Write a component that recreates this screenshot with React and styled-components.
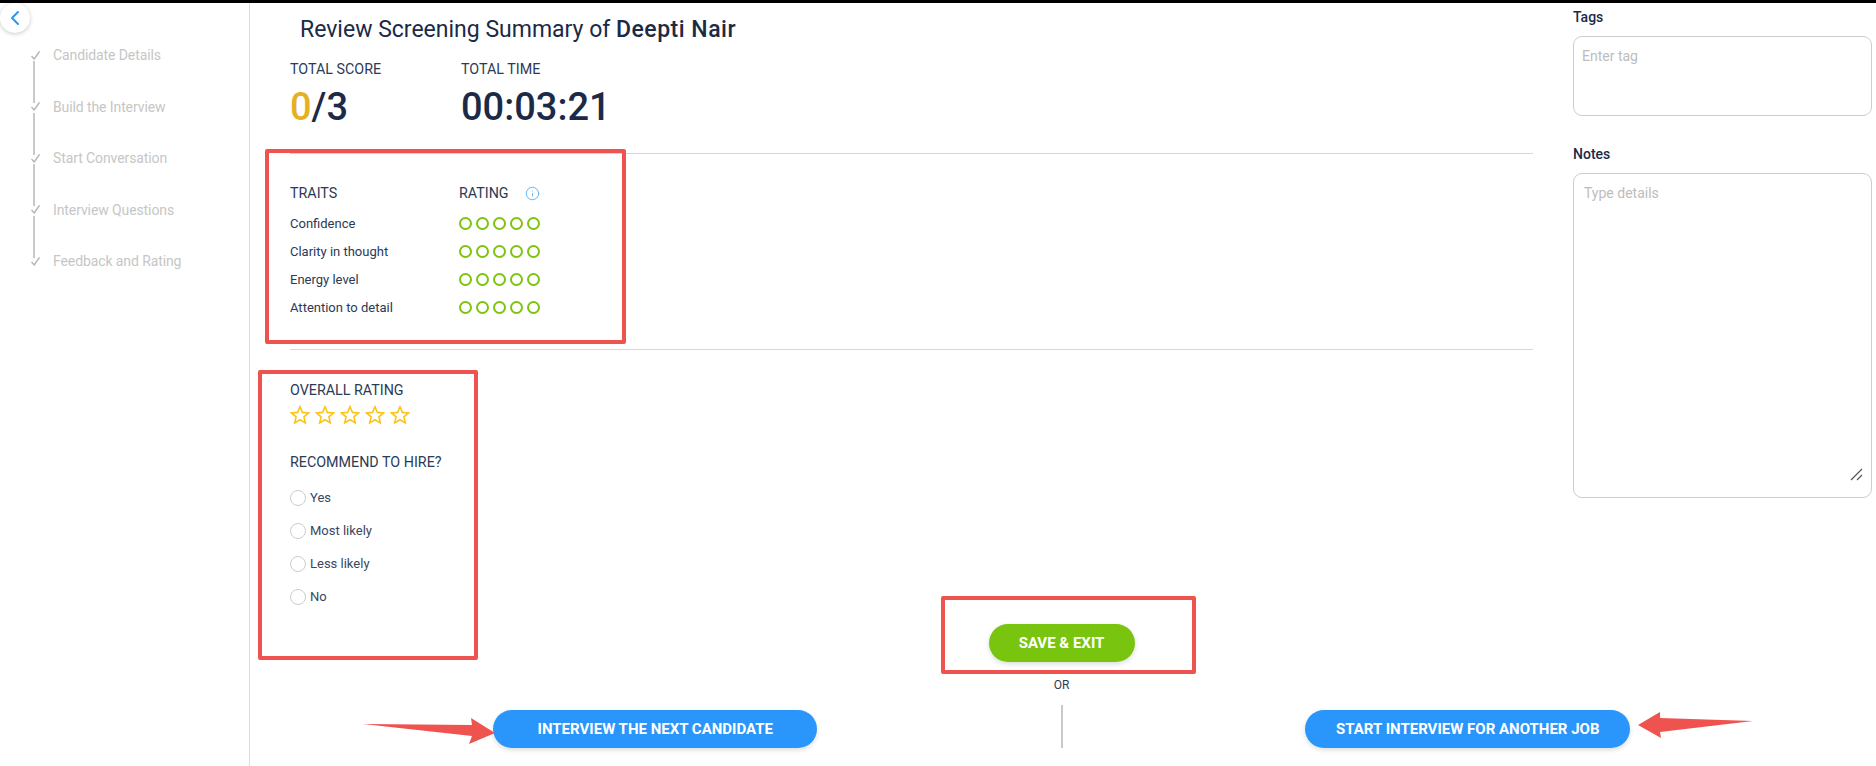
import React from "react";
import styled, { createGlobalStyle } from "styled-components";
import { ChevronLeft, Info } from "lucide-react";

const GlobalStyle = createGlobalStyle`
  html, body {
    margin: 0;
    padding: 0;
    background: #fff;
    font-family: Roboto, "Liberation Sans", sans-serif;
    color: #26344f;
  }
  * { box-sizing: border-box; }
`;

const Page = styled.div`
  position: relative;
  width: 1876px;
  height: 766px;
  overflow: hidden;
  display: flex;
  flex-direction: column;
`;

const TopBar = styled.div`
  height: 3px;
  background: #000;
  flex: none;
`;

const Shell = styled.div`
  flex: 1;
  display: flex;
  min-height: 0;
`;

/* sidebar */
const Sidebar = styled.aside`
  width: 250px;
  flex: none;
  border-right: 1px solid #d5e0ea;
  display: flex;
  flex-direction: column;
`;

const BackButton = styled.button`
  width: 30px;
  height: 30px;
  margin: 0;
  padding: 0;
  border: none;
  border-radius: 50%;
  background: #fff;
  box-shadow: 0 1px 4px rgba(0, 0, 0, 0.22);
  color: #2a96fb;
  display: flex;
  align-items: center;
  justify-content: center;
  flex: none;
`;

const StepList = styled.ol`
  list-style: none;
  margin: 13px 0 0;
  padding: 0 0 0 31px;
`;

const Step = styled.li`
  position: relative;
  display: flex;
  align-items: center;
  gap: 13px;
  height: 18px;
  margin-bottom: 33.5px;
  font-size: 14px;
  letter-spacing: -0.1px;
  color: #c6c6c6;

  &:not(:last-child)::after {
    content: "";
    position: absolute;
    left: 2px;
    top: 15px;
    width: 2px;
    height: 42px;
    background: #c9c9c9;
  }
`;

const StepCheck = () => (
  <svg width="9" height="9" viewBox="0 0 9 9" fill="none">
    <path d="M0.5 5 L3.2 8 L8.5 0.5" stroke="#b5b5b5" strokeWidth="1.4" />
  </svg>
);

/* main area */
const Main = styled.main`
  flex: 1;
  min-width: 0;
  display: flex;
  flex-direction: column;
`;

const Upper = styled.div`
  display: flex;
  height: 621px;
  flex: none;
`;

const Summary = styled.section`
  width: 1243px;
  margin-left: 40px;
  flex: none;
`;

const Title = styled.h1`
  margin: 12px 0 0 10px;
  font-size: 23px;
  line-height: 30px;
  font-weight: 400;
  color: #1b2a47;

  strong {
    font-weight: 500;
    letter-spacing: 0.5px;
  }
`;

const Stats = styled.div`
  display: grid;
  grid-template-columns: 171px auto;
  justify-content: start;
  margin-top: 15px;
`;

const Stat = styled.div`
  display: flex;
  flex-direction: column;
  gap: 7px;
`;

const Label = styled.div`
  font-size: 14.3px;
  line-height: 18px;
  color: #2b3a55;
`;

const Value = styled.div`
  font-size: 38px;
  line-height: 44px;
  font-weight: 500;
  color: #1b2a47;

  em {
    font-style: normal;
    color: #e6b022;
  }
`;

const Divider = styled.hr`
  margin: ${(p) => p.$top}px 0 0;
  border: none;
  height: 1px;
  background: #d3d6da;
`;

const TraitTable = styled.div`
  display: grid;
  grid-template-columns: 169px auto;
  justify-content: start;
  padding-top: 30px;
`;

const TraitHead = styled.div`
  display: flex;
  align-items: center;
  gap: 16px;
  height: 18px;
  margin-bottom: 7px;
  font-size: 14.3px;
  color: #2b3a55;
`;

const TraitName = styled.div`
  height: 28px;
  display: flex;
  align-items: center;
  font-size: 13px;
  color: #2b3a55;
`;

const Dots = styled.div`
  height: 28px;
  display: flex;
  align-items: center;
  gap: 4px;
`;

const Dot = styled.span`
  width: 13px;
  height: 13px;
  border: 2px solid #7cc40e;
  border-radius: 50%;
`;

const Overall = styled.div`
  margin-top: 31px;
`;

const Stars = styled.div`
  display: flex;
  gap: 5px;
  margin-top: 6px;
  height: 20px;
`;

const StarIcon = () => (
  <svg width="20" height="20" viewBox="0 0 20 20" fill="none">
    <path
      d="M10 1.8 L12.4 7.4 L18.5 7.9 L13.9 11.9 L15.3 17.9 L10 14.7 L4.7 17.9 L6.1 11.9 L1.5 7.9 L7.6 7.4 Z"
      stroke="#fcc419"
      strokeWidth="1.6"
    />
  </svg>
);

const Question = styled(Label)`
  margin-top: 28px;
`;

const Options = styled.div`
  margin-top: 10px;
`;

const Option = styled.label`
  display: flex;
  align-items: center;
  gap: 4px;
  height: 33px;
  font-size: 13px;
  color: #3a4762;
`;

const Radio = styled.span`
  width: 16px;
  height: 16px;
  border: 1px solid #c9ccd4;
  border-radius: 50%;
`;

/* right column */
const Side = styled.aside`
  width: 299px;
  margin-left: 40px;
  flex: none;
`;

const FieldLabel = styled.div`
  margin-top: ${(p) => p.$top}px;
  font-size: 14px;
  line-height: 18px;
  font-weight: 500;
  color: #1b2a47;
`;

const Field = styled.textarea`
  display: block;
  width: 100%;
  height: ${(p) => p.$height}px;
  margin-top: 10px;
  padding: 10px ${(p) => p.$padX}px;
  border: 1px solid #cbcdd1;
  border-radius: 9px;
  outline: none;
  resize: none;
  font-family: inherit;
  font-size: 14px;
  line-height: 18px;

  &::placeholder {
    color: #bdbdbd;
  }
`;

const NotesWrap = styled.div`
  position: relative;
`;

const Grip = styled.svg`
  position: absolute;
  right: 9px;
  bottom: 17px;
`;

/* actions */
const Actions = styled.footer`
  display: flex;
  flex-direction: column;
  align-items: center;
  padding-right: 3px;
`;

const Pill = styled.button`
  height: 38px;
  width: ${(p) => p.$width}px;
  border: none;
  border-radius: 19px;
  background: ${(p) => p.$color};
  color: #fff;
  font-family: inherit;
  font-size: 15px;
  font-weight: 700;
  box-shadow: 0 2px 5px rgba(0, 0, 0, 0.14);
`;

const Or = styled.div`
  margin-top: 14px;
  font-size: 12px;
  line-height: 18px;
  color: #2b3a55;
`;

const NextRow = styled.div`
  align-self: stretch;
  display: grid;
  grid-template-columns: 1fr 2px 1fr;
  align-items: end;
  justify-items: center;
  margin-top: 11px;
`;

const VLine = styled.div`
  width: 2px;
  height: 43px;
  background: #c9c9c9;
`;

/* red review markup drawn over the page */
const MarkBox = styled.div`
  position: absolute;
  left: ${(p) => p.$x}px;
  top: ${(p) => p.$y}px;
  width: ${(p) => p.$w}px;
  height: ${(p) => p.$h}px;
  border: 4px solid #ef5350;
  border-radius: 2px;
  pointer-events: none;
`;

const MarkArrow = styled.svg`
  position: absolute;
  left: 0;
  top: 0;
  pointer-events: none;
`;

const steps = [
  "Candidate Details",
  "Build the Interview",
  "Start Conversation",
  "Interview Questions",
  "Feedback and Rating",
];
const traits = ["Confidence", "Clarity in thought", "Energy level", "Attention to detail"];
const options = ["Yes", "Most likely", "Less likely", "No"];

export default function App() {
  return (
    <Page>
      <GlobalStyle />
      <TopBar />
      <Shell>
        <Sidebar>
          <BackButton>
            <ChevronLeft size={24} strokeWidth={2} />
          </BackButton>
          <StepList>
            {steps.map((s) => (
              <Step key={s}>
                <StepCheck />
                {s}
              </Step>
            ))}
          </StepList>
        </Sidebar>
        <Main>
          <Upper>
            <Summary>
              <Title>
                Review Screening Summary of <strong>Deepti Nair</strong>
              </Title>
              <Stats>
                <Stat>
                  <Label>TOTAL SCORE</Label>
                  <Value>
                    <em>0</em>/3
                  </Value>
                </Stat>
                <Stat>
                  <Label>TOTAL TIME</Label>
                  <Value>00:03:21</Value>
                </Stat>
              </Stats>
              <Divider $top={24} />
              <TraitTable>
                <TraitHead>TRAITS</TraitHead>
                <TraitHead>
                  RATING <Info size={15} color="#5db0f7" strokeWidth={1.5} />
                </TraitHead>
                {traits.map((t) => (
                  <React.Fragment key={t}>
                    <TraitName>{t}</TraitName>
                    <Dots>
                      {[0, 1, 2, 3, 4].map((i) => (
                        <Dot key={i} />
                      ))}
                    </Dots>
                  </React.Fragment>
                ))}
              </TraitTable>
              <Divider $top={28} />
              <Overall>
                <Label>OVERALL RATING</Label>
                <Stars>
                  {[0, 1, 2, 3, 4].map((i) => (
                    <StarIcon key={i} />
                  ))}
                </Stars>
                <Question>RECOMMEND TO HIRE?</Question>
                <Options>
                  {options.map((o) => (
                    <Option key={o}>
                      <Radio />
                      {o}
                    </Option>
                  ))}
                </Options>
              </Overall>
            </Summary>
            <Side>
              <FieldLabel $top={5}>Tags</FieldLabel>
              <Field $height={80} $padX={8} placeholder="Enter tag" />
              <FieldLabel $top={29}>Notes</FieldLabel>
              <NotesWrap>
                <Field $height={325} $padX={10} placeholder="Type details" />
                <Grip width="13" height="13" viewBox="0 0 13 13" fill="none">
                  <path d="M1 12 L12 1 M7 12 L12 7" stroke="#555" strokeWidth="1.2" />
                </Grip>
              </NotesWrap>
            </Side>
          </Upper>
          <Actions>
            <Pill $width={146} $color="#78c40e">SAVE &amp; EXIT</Pill>
            <Or>OR</Or>
            <NextRow>
              <Pill $width={324} $color="#2a96fb">INTERVIEW THE NEXT CANDIDATE</Pill>
              <VLine />
              <Pill $width={325} $color="#2a96fb">START INTERVIEW FOR ANOTHER JOB</Pill>
            </NextRow>
          </Actions>
        </Main>
      </Shell>

      <MarkBox $x={265} $y={149} $w={361} $h={195} />
      <MarkBox $x={258} $y={370} $w={220} $h={290} />
      <MarkBox $x={941} $y={596} $w={255} $h={78} />
      <MarkArrow width="1876" height="766" viewBox="0 0 1876 766">
        <path d="M363 724 L472 725 L471 718 L495 733 L469 744 L472 736 Z" fill="#ef5350" />
        <path d="M1753 721 L1660 718 L1660 712 L1638 725 L1661 738 L1660 732 Z" fill="#ef5350" />
      </MarkArrow>
    </Page>
  );
}
